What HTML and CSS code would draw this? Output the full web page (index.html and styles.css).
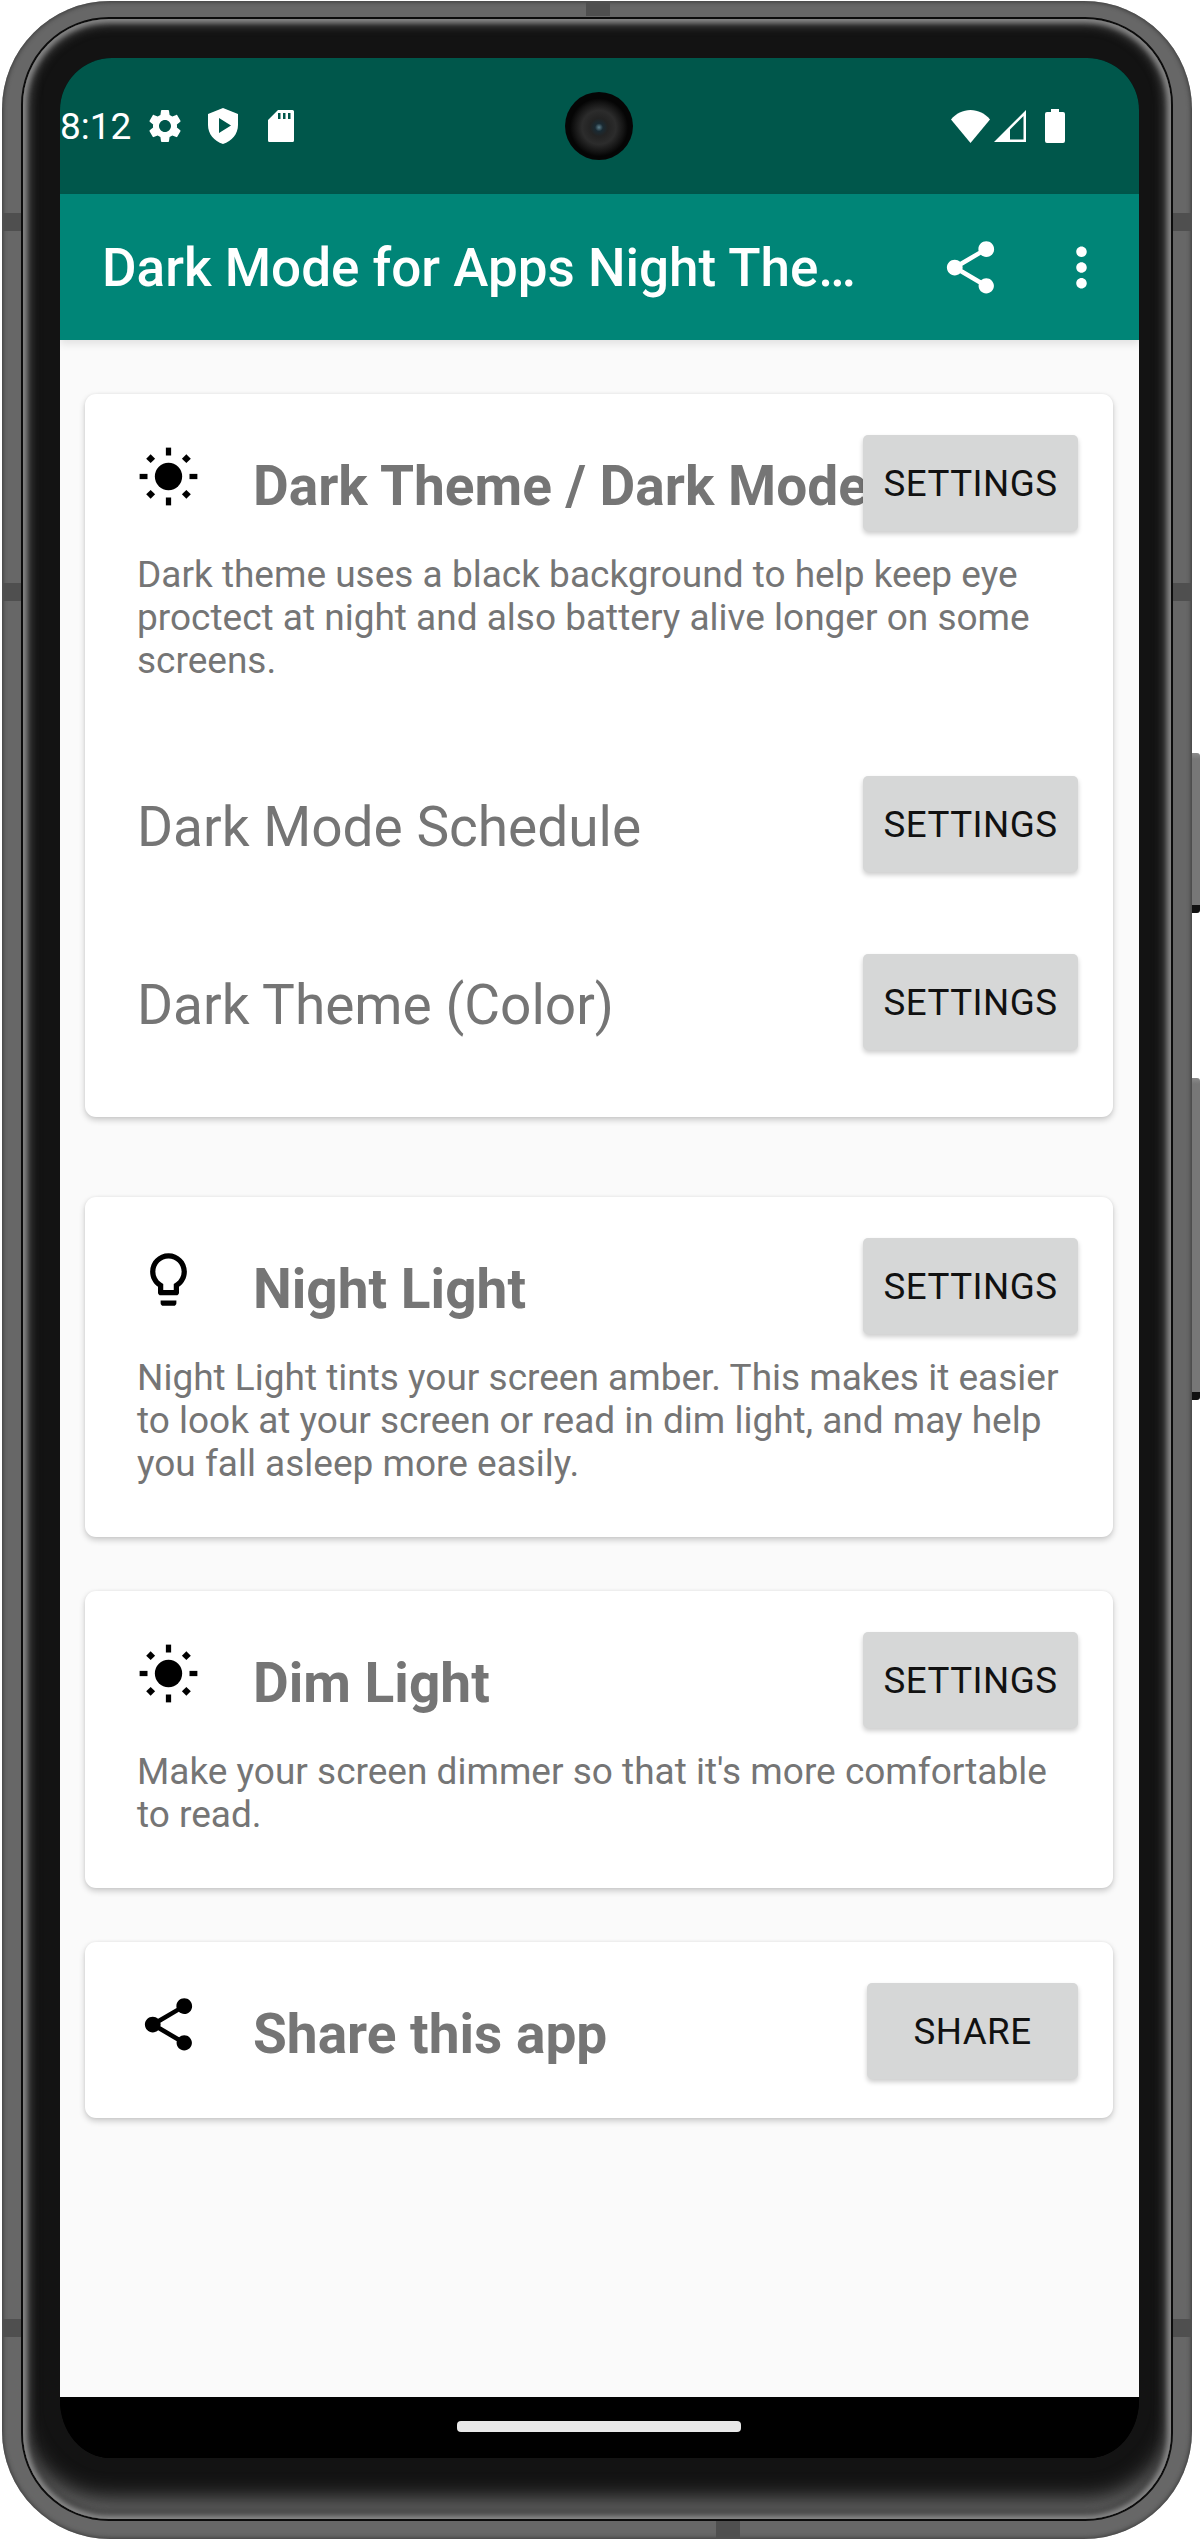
FILE: index.html
```html
<!DOCTYPE html>
<html lang="en">
<head>
    <meta charset="UTF-8">
    <meta name="viewport" content="width=device-width, initial-scale=1.0">
    <title>Dark Mode for Apps Night Theme</title>
    <link rel="stylesheet" href="styles.css">
</head>
<body>
    <div class="phone">
        <span class="side-btn side-btn-power"></span>
        <span class="side-btn side-btn-volume"></span>
        <span class="seam seam-top"></span>
        <span class="seam seam-bottom"></span>
        <span class="seam seam-side seam-a"></span>
        <span class="seam seam-side seam-b"></span>
        <span class="seam seam-side seam-c"></span>
        <span class="seam seam-side seam-right seam-a"></span>
        <span class="seam seam-side seam-right seam-b"></span>
        <span class="seam seam-side seam-right seam-c"></span>

        <div class="rim">
            <div class="bezel">
                <div class="screen">
                    <div class="status-bar">
                        <div class="status-left">
                            <span class="clock">8:12</span>
                            <svg class="ic-gear" viewBox="0 0 24 24"><path d="M19.14,12.94c0.04-0.3,0.06-0.61,0.06-0.94c0-0.32-0.02-0.64-0.07-0.94l2.03-1.58c0.18-0.14,0.23-0.41,0.12-0.61 l-1.92-3.32c-0.12-0.22-0.37-0.29-0.59-0.22l-2.39,0.96c-0.5-0.38-1.03-0.7-1.62-0.94L14.4,2.81c-0.04-0.24-0.24-0.41-0.48-0.41 h-3.84c-0.24,0-0.43,0.17-0.47,0.41L9.25,5.35C8.66,5.59,8.12,5.92,7.63,6.29L5.24,5.33c-0.22-0.08-0.47,0-0.59,0.22L2.74,8.87 C2.62,9.08,2.66,9.34,2.86,9.48l2.03,1.58C4.84,11.36,4.8,11.69,4.8,12s0.02,0.64,0.07,0.94l-2.03,1.58 c-0.18,0.14-0.23,0.41-0.12,0.61l1.92,3.32c0.12,0.22,0.37,0.29,0.59,0.22l2.39-0.96c0.5,0.38,1.03,0.7,1.62,0.94l0.36,2.54 c0.05,0.24,0.24,0.41,0.48,0.41h3.84c0.24,0,0.44-0.17,0.47-0.41l0.36-2.54c0.59-0.24,1.13-0.56,1.62-0.94l2.39,0.96 c0.22,0.08,0.47,0,0.59-0.22l1.92-3.32c0.12-0.22,0.07-0.47-0.12-0.61L19.14,12.94z M12,15.6c-1.98,0-3.6-1.62-3.6-3.6 s1.62-3.6,3.6-3.6s3.6,1.62,3.6,3.6S13.98,15.6,12,15.6z"/></svg>
                            <svg class="ic-shield" viewBox="0 0 30 36"><path fill-rule="evenodd" d="M15 0 L30 6 V17 C30 26 24 33 15 36 C6 33 0 26 0 17 V6 Z M11 10 V25 L23 17.5 Z"/></svg>
                            <svg class="ic-sd" viewBox="0 0 26 32"><path fill-rule="evenodd" d="M10 0 H24.5 Q26 0 26 1.5 V30.5 Q26 32 24.5 32 H1.5 Q0 32 0 30.5 V10 Z M10 3 V9 H12.5 V3 Z M15 3 V9 H17.5 V3 Z M20 3 V9 H22.5 V3 Z"/></svg>
                        </div>
                        <span class="camera"></span>
                        <div class="status-right">
                            <svg class="ic-wifi" viewBox="0 0 39 33"><path d="M19.5 33 L0 9.5 C5 3.5 12 0 19.5 0 C27 0 34 3.5 39 9.5 Z"/></svg>
                            <svg class="ic-signal" viewBox="0 0 32 32"><path fill-rule="evenodd" d="M32 0 V32 H0 Z M29.5 6 L16 19.5 V29.5 H29.5 Z"/></svg>
                            <svg class="ic-battery" viewBox="0 0 20 34"><path d="M6 0 H14 V3 H18 Q20 3 20 5 V32 Q20 34 18 34 H2 Q0 34 0 32 V5 Q0 3 2 3 H6 Z"/></svg>
                        </div>
                    </div>

                    <div class="app-bar">
                        <h1 class="app-title">Dark Mode for Apps Night The…</h1>
                        <svg class="ic-63 app-share" viewBox="0 0 24 24"><path d="M18 16.08c-.76 0-1.44.3-1.96.77L8.91 12.7c.05-.23.09-.46.09-.7s-.04-.47-.09-.7l7.05-4.11c.54.5 1.25.81 2.04.81 1.66 0 3-1.34 3-3s-1.34-3-3-3-3 1.34-3 3c0 .24.04.47.09.7L8.04 9.81C7.5 9.31 6.79 9 6 9c-1.66 0-3 1.34-3 3s1.34 3 3 3c.79 0 1.5-.31 2.04-.81l7.12 4.16c-.05.21-.08.43-.08.65 0 1.61 1.31 2.92 2.92 2.92 1.61 0 2.92-1.31 2.92-2.92s-1.31-2.92-2.92-2.92z"/></svg>
                        <svg class="ic-63" viewBox="0 0 24 24"><path d="M12 8c1.1 0 2-.9 2-2s-.9-2-2-2-2 .9-2 2 .9 2 2 2zm0 2c-1.1 0-2 .9-2 2s.9 2 2 2 2-.9 2-2-.9-2-2-2zm0 6c-1.1 0-2 .9-2 2s.9 2 2 2 2-.9 2-2-.9-2-2-2z"/></svg>
                    </div>

                    <div class="content">
                        <div class="card card-dark">
                            <div class="card-head">
                                <svg class="ic-63 card-icon" viewBox="0 0 24 24"><use href="#sun"/></svg>
                                <h2 class="card-title">Dark Theme / Dark Mode</h2>
                                <button class="btn">SETTINGS</button>
                            </div>
                            <p class="card-text">Dark theme uses a black background to help keep eye proctect at night and also battery alive longer on some screens.</p>
                            <div class="sub-row sub-row-first">
                                <span class="sub-label">Dark Mode Schedule</span>
                                <button class="btn">SETTINGS</button>
                            </div>
                            <div class="sub-row">
                                <span class="sub-label">Dark Theme (Color)</span>
                                <button class="btn">SETTINGS</button>
                            </div>
                        </div>

                        <div class="card">
                            <div class="card-head">
                                <svg class="ic-63 card-icon" viewBox="0 0 24 24"><path d="M9 21c0 .55.45 1 1 1h4c.55 0 1-.45 1-1v-1H9v1zm3-19C8.14 2 5 5.14 5 9c0 2.38 1.19 4.47 3 5.74V17c0 .55.45 1 1 1h6c.55 0 1-.45 1-1v-2.26c1.81-1.27 3-3.36 3-5.74 0-3.86-3.14-7-7-7zm2.85 11.1l-.85.6V16h-4v-2.3l-.85-.6C7.8 12.16 7 10.63 7 9c0-2.76 2.24-5 5-5s5 2.24 5 5c0 1.63-.8 3.16-2.15 4.1z"/></svg>
                                <h2 class="card-title">Night Light</h2>
                                <button class="btn">SETTINGS</button>
                            </div>
                            <p class="card-text">Night Light tints your screen amber. This makes it easier to look at your screen or read in dim light, and may help you fall asleep more easily.</p>
                        </div>

                        <div class="card">
                            <div class="card-head">
                                <svg class="ic-63 card-icon" viewBox="0 0 24 24"><use href="#sun"/></svg>
                                <h2 class="card-title">Dim Light</h2>
                                <button class="btn">SETTINGS</button>
                            </div>
                            <p class="card-text">Make your screen dimmer so that it's more comfortable to read.</p>
                        </div>

                        <div class="card card-share">
                            <div class="card-head">
                                <svg class="ic-63 card-icon" viewBox="0 0 24 24"><path d="M18 16.08c-.76 0-1.44.3-1.96.77L8.91 12.7c.05-.23.09-.46.09-.7s-.04-.47-.09-.7l7.05-4.11c.54.5 1.25.81 2.04.81 1.66 0 3-1.34 3-3s-1.34-3-3-3-3 1.34-3 3c0 .24.04.47.09.7L8.04 9.81C7.5 9.31 6.79 9 6 9c-1.66 0-3 1.34-3 3s1.34 3 3 3c.79 0 1.5-.31 2.04-.81l7.12 4.16c-.05.21-.08.43-.08.65 0 1.61 1.31 2.92 2.92 2.92 1.61 0 2.92-1.31 2.92-2.92s-1.31-2.92-2.92-2.92z"/></svg>
                                <h2 class="card-title">Share this app</h2>
                                <button class="btn btn-share">SHARE</button>
                            </div>
                        </div>
                    </div>

                    <div class="nav-bar">
                        <span class="nav-pill"></span>
                    </div>
                </div>
            </div>
        </div>
    </div>

    <!-- shared sun icon -->
    <svg class="defs" aria-hidden="true">
        <symbol id="sun" viewBox="0 0 24 24">
            <circle cx="12" cy="12" r="5.2"/>
            <rect x="11" y="1" width="2" height="3"/>
            <rect x="11" y="20" width="2" height="3"/>
            <rect x="1" y="11" width="3" height="2"/>
            <rect x="20" y="11" width="3" height="2"/>
            <rect x="4" y="4" width="2.4" height="2.4" transform="rotate(45 5.2 5.2)"/>
            <rect x="17.6" y="4" width="2.4" height="2.4" transform="rotate(45 18.8 5.2)"/>
            <rect x="4" y="17.6" width="2.4" height="2.4" transform="rotate(45 5.2 18.8)"/>
            <rect x="17.6" y="17.6" width="2.4" height="2.4" transform="rotate(45 18.8 18.8)"/>
        </symbol>
    </svg>
</body>
</html>
```

FILE: styles.css
```css
* {
    margin: 0;
    padding: 0;
    box-sizing: border-box;
}

body {
    font-family: Roboto, "Liberation Sans", sans-serif;
    background: white;
    width: 1200px;
    height: 2541px;
    overflow: hidden;
    padding: 1px 8px 2px 2px;
}

/* device frame */
.phone {
    position: relative;
    height: 2538px;
    padding: 16px 19px 18px 19px;
    background: #676767;
    border-radius: 108px;
    display: flex;
    box-shadow: inset 0 0 4px 1px #3c3c3c;
}

.rim {
    flex: 1;
    min-width: 0;
    display: flex;
    border: 2px solid #0c0c0c;
    border-radius: 88px;
}

.bezel {
    flex: 1;
    min-width: 0;
    display: flex;
    padding: 39px 32px 61px 37px;
    background: #131313;
    border-radius: 86px;
    box-shadow: inset 0 0 5px 4px #868686, inset 0 0 8px 8px #3a3a3a, inset 0 -26px 22px -6px #6a6a6a;
}

.side-btn {
    position: absolute;
    right: -8px;
    width: 8px;
    background: linear-gradient(180deg, #8a8a8a 0, #777 6px, #777 calc(100% - 8px), #111 calc(100% - 8px));
    border-radius: 0 3px 3px 0;
}

.side-btn-power {
    top: 752px;
    height: 160px;
}

.side-btn-volume {
    top: 1077px;
    height: 322px;
}

.seam {
    position: absolute;
    background: #4f4f4f;
}

.seam-top {
    top: 0;
    left: 584px;
    width: 24px;
    height: 15px;
}

.seam-bottom {
    bottom: 0;
    left: 714px;
    width: 24px;
    height: 18px;
}

.seam-side {
    left: 0;
    width: 19px;
    height: 18px;
}

.seam-right {
    left: auto;
    right: 0;
}

.seam-a {
    top: 212px;
}

.seam-b {
    top: 582px;
}

.seam-c {
    top: 2318px;
}

.screen {
    flex: 1;
    min-width: 0;
    display: flex;
    flex-direction: column;
    background: #000;
    overflow: hidden;
    border-radius: 52px 52px 50px 50px / 52px 52px 58px 58px;
}

/* status bar */
.status-bar {
    position: relative;
    height: 136px;
    flex: none;
    background: #00574b;
    display: flex;
    align-items: center;
    justify-content: space-between;
    padding-right: 74px;
    color: white;
    fill: white;
}

.status-left,
.status-right {
    display: flex;
    align-items: center;
}

.clock {
    font-size: 37px;
    width: 85px;
}

.ic-gear {
    width: 40px;
    height: 40px;
    margin-right: 23px;
}

.ic-shield {
    width: 30px;
    height: 36px;
    margin-right: 30px;
}

.ic-sd {
    width: 26px;
    height: 32px;
}

.ic-wifi {
    width: 39px;
    height: 33px;
    margin-right: 4px;
}

.ic-signal {
    width: 32px;
    height: 32px;
    margin-right: 19px;
}

.ic-battery {
    width: 20px;
    height: 34px;
}

.camera {
    position: absolute;
    left: 505px;
    top: 34px;
    width: 68px;
    height: 68px;
    border-radius: 50%;
    background: radial-gradient(circle at 50% 52%, #5d7f8c 0, #1a2a33 4px, #232323 9px, #2c2c2c 17px, #161616 24px, #050505 29px);
}

/* app bar */
.app-bar {
    height: 146px;
    flex: none;
    position: relative;
    z-index: 1;
    background: #008577;
    display: flex;
    align-items: center;
    padding: 0 26px 0 42px;
    fill: white;
    box-shadow: 0 4px 8px rgba(0, 0, 0, 0.1);
}

.app-title {
    flex: 1;
    min-width: 0;
    overflow: hidden;
    padding-top: 2px;
    color: white;
    font-size: 53px;
    font-weight: 500;
    white-space: nowrap;
}

.ic-63 {
    width: 63px;
    height: 63px;
    flex: none;
}

.app-share {
    margin-right: 48px;
}

/* main content */
.content {
    flex: 1;
    background: #fafafa;
    padding: 54px 26px 0 25px;
}

.card {
    background: white;
    border-radius: 11px;
    padding: 41px 35px 52px 52px;
    margin-bottom: 54px;
    box-shadow: 0 3px 6px rgba(0, 0, 0, 0.2), 0 0 3px rgba(0, 0, 0, 0.06);
}

.card-dark {
    padding-bottom: 67px;
    margin-bottom: 80px;
}

.card-share {
    padding-bottom: 39px;
}

.card-head {
    display: flex;
    align-items: center;
}

.card-icon {
    margin: -14px 53px 0 0;
}

.card-title {
    flex: 1;
    min-width: 0;
    overflow: hidden;
    white-space: nowrap;
    margin-top: 5px;
    color: #757575;
    font-size: 55px;
    font-weight: 700;
}

.btn {
    flex: none;
    width: 215px;
    height: 96px;
    border: none;
    border-radius: 5px;
    background: #d6d7d7;
    color: #111;
    font-family: inherit;
    font-size: 36.75px;
    font-weight: 400;
    letter-spacing: 0.012em;
    box-shadow: 0 3px 5px rgba(0, 0, 0, 0.2);
}

.btn-share {
    width: 211px;
}

.card-text {
    margin-top: 22px;
    color: #757575;
    font-size: 37px;
    line-height: 43px;
}

.sub-row {
    display: flex;
    align-items: center;
    justify-content: space-between;
    margin-top: 82px;
}

.sub-row-first {
    margin-top: 94px;
}

.sub-label {
    padding-top: 5px;
    color: #757575;
    font-size: 55px;
}

/* nav bar */
.nav-bar {
    height: 61px;
    flex: none;
    background: #000;
    display: flex;
    justify-content: center;
    align-items: flex-start;
    padding-top: 24px;
    padding-right: 2px;
}

.nav-pill {
    width: 284px;
    height: 11px;
    background: #e8e8e8;
    border-radius: 4px;
}

.defs {
    position: absolute;
    width: 0;
    height: 0;
}
```
